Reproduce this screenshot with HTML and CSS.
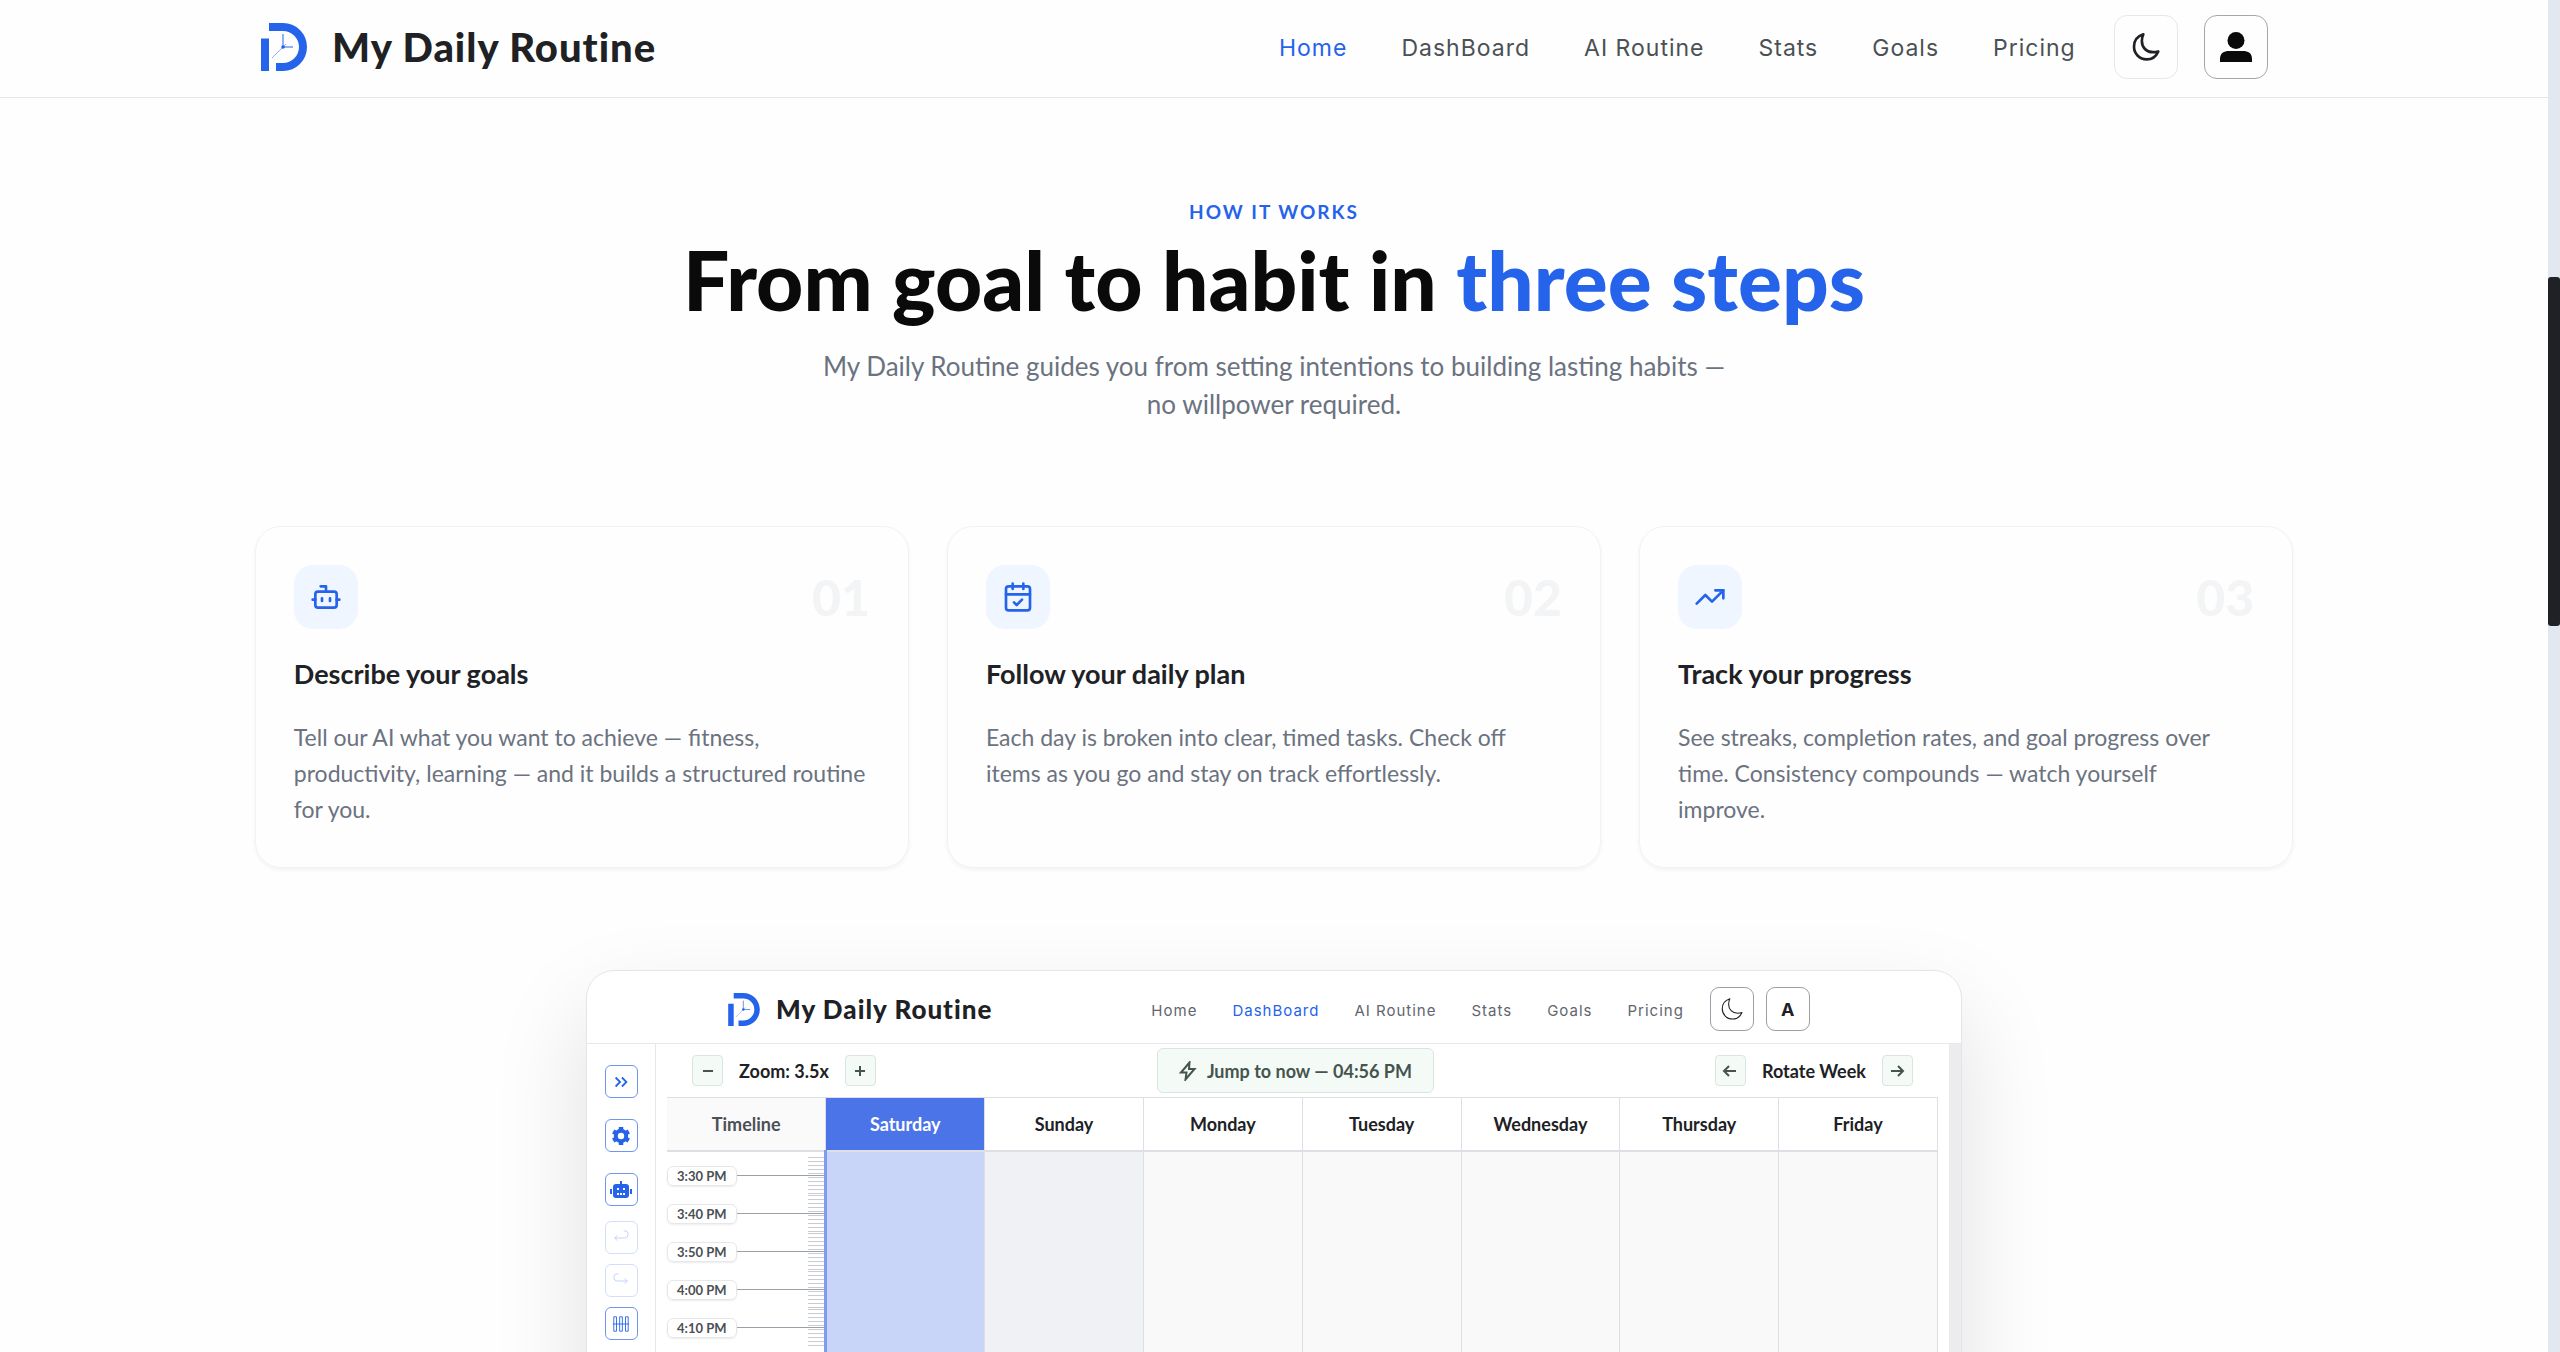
FILE: index.html
```html
<!DOCTYPE html>
<html lang="en">
<head>
  <meta charset="UTF-8" />
  <meta name="viewport" content="width=device-width, initial-scale=1.0"/>
  <title>My Daily Routine</title>
  <link rel="stylesheet" href="styles.css">
</head>
<body>

  <!-- Shared icons -->
  <svg class="sprite" aria-hidden="true">
    <symbol id="logo" viewBox="0 0 46 48">
      <path d="M0 15.500h8V48H0z M8 0h14a24 24 0 0 1 0 48h-7v-8h7a16 16 0 0 0 0-32H8z" fill="#2563eb"/>
      <path d="M22 11v13h10" fill="none" stroke="#2563eb" stroke-width="1"/>
      <path d="M25 21L11 35" fill="none" stroke="#2563eb" stroke-width="0.500"/>
      <circle cx="22" cy="24" r="1.800" fill="#2563eb"/>
    </symbol>
    <symbol id="moon" viewBox="0 0 24 24">
      <path d="M10 2.500C6 3.800 3 7 3 11.800a9.500 9.500 0 0 0 9.500 9.500c4 0 7-2 8.700-6-1.500.5-2.700.6-4 .6-5 0-8.300-3.600-8.300-8.400 0-1.800.3-3.200 1.100-5z" fill="none" stroke="currentColor" stroke-linejoin="round"/>
    </symbol>
  </svg>

  <div class="page">
    <header class="navbar">
      <a class="brand" href="#">
        <svg class="brand-logo"><use href="#logo"/></svg>
        <span>My Daily Routine</span>
      </a>
      <nav class="nav-links">
        <a class="active" href="#">Home</a>
        <a href="#">DashBoard</a>
        <a href="#">AI Routine</a>
        <a href="#">Stats</a>
        <a href="#">Goals</a>
        <a href="#">Pricing</a>
      </nav>
      <div class="nav-buttons">
        <button class="icon-button" aria-label="Toggle theme"><svg class="moon"><use href="#moon"/></svg></button>
        <button class="icon-button user" aria-label="Account">
          <svg viewBox="0 0 32 32" fill="#0a0a0a"><circle cx="16" cy="9.500" r="8.500"/><path d="M0 31v-3c0-6 4-8 9-8h14c5 0 9 2 9 8v3z"/></svg>
        </button>
      </div>
    </header>

    <main>
      <section class="intro">
        <p class="eyebrow">HOW IT WORKS</p>
        <h1>From goal to habit in <span>three steps</span></h1>
        <p class="lead">My Daily Routine guides you from setting intentions to building lasting habits — <br>no willpower required.</p>
      </section>

      <section class="steps">
        <article class="step">
          <div class="step-top">
            <div class="step-icon">
              <svg viewBox="0 0 24 24"><path d="M12 8V4H8M2 14h2M20 14h2M15 13v2M9 13v2"/><rect x="4" y="8" width="16" height="12" rx="2"/></svg>
            </div>
            <span class="step-number">01</span>
          </div>
          <h3>Describe your goals</h3>
          <p>Tell our AI what you want to achieve — fitness, productivity, learning — and it builds a structured routine for you.</p>
        </article>
        <article class="step">
          <div class="step-top">
            <div class="step-icon">
              <svg viewBox="0 0 24 24"><path d="M8 2v4M16 2v4M3 10h18M9 16l2 2 4-4"/><rect x="3" y="4" width="18" height="18" rx="2"/></svg>
            </div>
            <span class="step-number">02</span>
          </div>
          <h3>Follow your daily plan</h3>
          <p>Each day is broken into clear, timed tasks. Check off items as you go and stay on track effortlessly.</p>
        </article>
        <article class="step">
          <div class="step-top">
            <div class="step-icon">
              <svg viewBox="0 0 24 24"><path d="M16 7h6v6"/><path d="M22 7l-8.500 8.500-5-5L2 17"/></svg>
            </div>
            <span class="step-number">03</span>
          </div>
          <h3>Track your progress</h3>
          <p>See streaks, completion rates, and goal progress over time. Consistency compounds — watch yourself <br>improve.</p>
        </article>
      </section>

      <!-- Dashboard preview -->
      <section class="preview">
        <div class="preview-nav">
          <a class="brand" href="#">
            <svg class="brand-logo"><use href="#logo"/></svg>
            <span>My Daily Routine</span>
          </a>
          <nav class="nav-links">
            <a href="#">Home</a>
            <a class="active" href="#">DashBoard</a>
            <a href="#">AI Routine</a>
            <a href="#">Stats</a>
            <a href="#">Goals</a>
            <a href="#">Pricing</a>
          </nav>
          <div class="nav-buttons">
            <button class="icon-button" aria-label="Toggle theme"><svg class="moon"><use href="#moon"/></svg></button>
            <button class="icon-button">A</button>
          </div>
        </div>

        <div class="preview-body">
          <div class="sidebar">
            <div class="tools">
              <button aria-label="Expand"><svg viewBox="0 0 20 20"><path d="M4 5l5 5-5 5M11 5l5 5-5 5"/></svg></button>
              <button aria-label="Settings"><svg class="wide" viewBox="0 0 20 20"><circle cx="10" cy="10" r="5.200" stroke-width="4"/><path d="M10 1v3M10 16v3M2.200 5.500l2.600 1.500M15.200 13l2.600 1.500M2.200 14.500l2.600-1.500M15.200 7l2.600-1.500" stroke-width="4.500"/></svg></button>
              <button aria-label="AI"><svg class="wide" viewBox="0 0 22 20"><path d="M11 1v4M1 9v5M21 9v5" stroke-width="2"/><rect x="4" y="5" width="14" height="12" rx="2" fill="currentColor"/><path d="M7 9h2M13 9h2M7 14h2M10 14h2M13 14h2" stroke="#fff" stroke-width="2"/></svg></button>
            </div>
            <div class="history">
              <button disabled aria-label="Undo"><svg viewBox="0 0 20 20"><path d="M13 2h1a4 4 0 0 1 0 8H3M6 7l-3 3 3 3"/></svg></button>
              <button disabled aria-label="Redo"><svg viewBox="0 0 20 20"><path d="M7 2H6a4 4 0 0 0 0 8h11M14 7l3 3-3 3"/></svg></button>
              <button aria-label="Columns"><svg viewBox="0 0 20 20"><path d="M2 2h3v16H2zM8.500 2h3v16h-3zM15 2h3v16h-3zM1 10h18"/></svg></button>
            </div>
          </div>

          <div class="planner">
            <div class="toolbar">
              <div class="tool-group">
                <button aria-label="Zoom out"><svg viewBox="0 0 16 16"><path d="M3 8h10"/></svg></button>
                <span>Zoom: 3.5x</span>
                <button aria-label="Zoom in"><svg viewBox="0 0 16 16"><path d="M3 8h10M8 3v10"/></svg></button>
              </div>
              <button class="jump">
                <svg viewBox="0 0 18 20"><path d="M10.500 1.500L2 11.500h5.500l-1 7 9-10.500H10z"/></svg>
                Jump to now — 04:56 PM
              </button>
              <div class="tool-group">
                <button aria-label="Previous"><svg viewBox="0 0 16 16"><path d="M14 8H2M7 3L2 8l5 5"/></svg></button>
                <span>Rotate Week</span>
                <button aria-label="Next"><svg viewBox="0 0 16 16"><path d="M2 8h12M9 3l5 5-5 5"/></svg></button>
              </div>
            </div>
            <table class="week-table">
              <thead>
                <tr>
                  <th class="timeline">Timeline</th>
                  <th class="today">Saturday</th>
                  <th>Sunday</th>
                  <th>Monday</th>
                  <th>Tuesday</th>
                  <th>Wednesday</th>
                  <th>Thursday</th>
                  <th>Friday</th>
                </tr>
              </thead>
              <tbody>
                <tr>
                  <td class="times">
                    <div class="time"><span>3:30 PM</span></div>
                    <div class="time"><span>3:40 PM</span></div>
                    <div class="time"><span>3:50 PM</span></div>
                    <div class="time"><span>4:00 PM</span></div>
                    <div class="time"><span>4:10 PM</span></div>
                  </td>
                  <td class="today"></td>
                  <td class="next"></td>
                  <td></td>
                  <td></td>
                  <td></td>
                  <td></td>
                  <td></td>
                </tr>
              </tbody>
            </table>
          </div>
          <div class="gutter"></div>
        </div>
      </section>
    </main>
  </div>

  <div class="scrollbar"><div class="thumb"></div></div>

</body>
</html>
```
FILE: styles.css
```css
* {
  box-sizing: border-box;
}

body {
  font-family: Lato, sans-serif;
  margin: 0;
  background: #fefefe;
  color: #202124;
}

h1, h3, p {
  margin: 0;
}

a {
  color: inherit;
  text-decoration: none;
}

button {
  font-family: inherit;
  padding: 0;
  cursor: pointer;
}

.sprite {
  position: absolute;
  width: 0;
  height: 0;
}

.page {
  height: 100vh;
  overflow: hidden;
  padding-right: 12px;
}

/* Navbar */
.navbar {
  display: flex;
  align-items: center;
  height: 98px;
  padding: 0 11% 4px 261px;
  border-bottom: 1px solid #e5e7eb;
}

.brand {
  display: flex;
  align-items: center;
  gap: 25px;
  margin-right: auto;
  font-size: 40px;
  line-height: 44px;
  font-weight: 900;
  letter-spacing: 1px;
}

.brand-logo {
  width: 46px;
  height: 48px;
}

.nav-links {
  display: flex;
  gap: 54px;
  padding-top: 2px;
  font-family: Inter, sans-serif;
  font-size: 23px;
  letter-spacing: 1px;
  color: #4b5055;
}

.nav-links .active {
  color: #2563eb;
}

.nav-buttons {
  display: flex;
  gap: 26px;
  margin-left: 38px;
}

.icon-button {
  display: flex;
  align-items: center;
  justify-content: center;
  width: 64px;
  height: 64px;
  background: none;
  border: 1px solid #e5e7eb;
  border-radius: 13px;
  color: #202124;
}

.icon-button.user {
  border-color: #a3a6ad;
}

.icon-button svg {
  width: 32px;
  height: 32px;
}

.moon {
  stroke-width: 2;
}

/* Intro */
.intro {
  padding-top: 98px;
  text-align: center;
}

.eyebrow {
  font-size: 19px;
  line-height: 32px;
  font-weight: 700;
  letter-spacing: 2px;
  color: #2563eb;
}

h1 {
  margin-top: 3px;
  font-size: 82px;
  line-height: 96px;
  font-weight: 900;
  color: #0a0a0a;
}

h1 span {
  color: #2563eb;
}

.lead {
  margin-top: 20px;
  font-size: 26px;
  line-height: 38px;
  color: #6b7280;
}

/* Step cards */
.steps {
  display: grid;
  grid-template-columns: repeat(3, 1fr);
  gap: 38px;
  width: 80%;
  margin: 103px auto 0;
}

.step {
  padding: 38px 38px 40px;
  border: 1px solid #f1f2f4;
  border-radius: 26px;
  box-shadow: 0 2px 4px rgba(0, 0, 0, 0.05);
}

.step-top {
  display: flex;
  align-items: center;
  justify-content: space-between;
}

.step-icon {
  display: flex;
  align-items: center;
  justify-content: center;
  width: 64px;
  height: 64px;
  border-radius: 19px;
  background: #eff6ff;
}

.step-icon svg {
  width: 32px;
  height: 32px;
  fill: none;
  stroke: #2563eb;
  stroke-width: 2;
  stroke-linecap: round;
  stroke-linejoin: round;
}

.step-number {
  font-size: 50px;
  line-height: 50px;
  font-weight: 900;
  color: #f3f4f6;
}

.step h3 {
  margin-top: 26px;
  font-size: 27px;
  line-height: 38px;
}

.step p {
  margin-top: 26px;
  font-size: 23px;
  line-height: 36px;
  color: #6b7280;
}

/* Dashboard preview */
.preview {
  width: 54%;
  margin: 102px auto 0;
  border: 1px solid #e2e6ec;
  border-radius: 28px;
  overflow: hidden;
  background: #fff;
  box-shadow: 0 40px 96px rgba(0, 0, 0, 0.12);
}

.preview-nav {
  display: flex;
  align-items: center;
  height: 73px;
  padding: 4px 11% 0 141px;
  border-bottom: 1px solid #e5e7eb;
}

.preview-nav .brand {
  gap: 16px;
  font-size: 26px;
}

.preview-nav .brand-logo {
  width: 32px;
  height: 33px;
}

.preview-nav .nav-links {
  gap: 35px;
  font-size: 15px;
  color: #5f666e;
}

.preview-nav .nav-links .active {
  color: #2563eb;
}

.preview-nav .nav-buttons {
  gap: 12px;
  margin-left: 26px;
}

.preview-nav .icon-button {
  width: 44px;
  height: 44px;
  border-color: #9aa0a8;
  border-radius: 9px;
  font-family: Inter, sans-serif;
  font-size: 18px;
  font-weight: 700;
}

.preview-nav .icon-button svg {
  width: 26px;
  height: 26px;
}

.preview-nav .moon {
  stroke-width: 1;
}

.preview-body {
  display: flex;
}

.sidebar {
  width: 69px;
  padding-top: 21px;
  border-right: 1px solid #e5e7eb;
}

.tools, .history {
  display: flex;
  flex-direction: column;
  align-items: center;
  gap: 21px;
}

.history {
  gap: 10px;
  margin-top: 15px;
}

.sidebar button {
  display: flex;
  align-items: center;
  justify-content: center;
  width: 33px;
  height: 33px;
  border: 1px solid #6f95f0;
  border-radius: 6px;
  background: none;
  color: #2563eb;
}

.sidebar button:disabled {
  opacity: 0.3;
}

.sidebar svg {
  width: 18px;
  height: 18px;
  fill: none;
  stroke: currentColor;
  stroke-width: 2;
}

.sidebar .history svg {
  stroke-width: 1;
}

.sidebar .wide {
  width: 22px;
  height: 20px;
}

.planner {
  flex: 1;
  padding: 0 11px;
}

.toolbar {
  display: flex;
  align-items: center;
  justify-content: space-between;
  height: 53px;
  padding: 0 25px;
  font-size: 18px;
  font-weight: 700;
}

.tool-group {
  display: flex;
  align-items: center;
  gap: 16px;
}

.toolbar button {
  display: flex;
  align-items: center;
  justify-content: center;
  width: 31px;
  height: 31px;
  border: 1px solid #dbe5e0;
  border-radius: 4px;
  background: #f4fbf7;
  color: #46544e;
}

.toolbar svg {
  width: 16px;
  height: 16px;
  fill: none;
  stroke: currentColor;
  stroke-width: 2;
}

.toolbar .jump {
  gap: 10px;
  width: 277px;
  height: 45px;
  border-radius: 6px;
  font-size: 18px;
  font-weight: 700;
}

.toolbar .jump svg {
  width: 18px;
  height: 20px;
}

.week-table {
  width: 100%;
  table-layout: fixed;
  border-collapse: collapse;
}

.week-table th {
  height: 53px;
  padding: 0;
  border: 1px solid #dcdfe4;
  border-bottom-width: 2px;
  font-size: 18px;
}

.week-table .timeline {
  border-left: none;
  background: #fafafa;
  color: #4b5055;
}

.week-table th.today {
  background: #4a74e8;
  color: #fff;
}

.week-table td {
  height: 480px;
  padding: 0;
  border-right: 1px solid #dcdfe4;
  background: #f9f9f9;
  vertical-align: top;
}

.week-table td.today {
  border-left: 3px solid #7f9df0;
  background: #c8d4f8;
}

.week-table td.next {
  background: #f0f1f4;
}

.week-table td.times {
  padding-top: 5px;
  border-right: none;
  background: #fff;
}

.time {
  display: flex;
  align-items: center;
  height: 38px;
  background: repeating-linear-gradient(#c9ccd1 0 1px, transparent 1px 4px) right / 16px 100% no-repeat;
}

.time::after {
  content: "";
  flex: 1;
  height: 1px;
  background: #9ba1a8;
}

.time span {
  padding: 0 9px;
  border: 1px solid #e5e7eb;
  border-radius: 6px;
  box-shadow: 0 1px 2px rgba(0, 0, 0, 0.08);
  font-size: 13px;
  line-height: 18px;
  font-weight: 700;
  color: #4b5055;
}

.gutter {
  width: 12px;
  background: #ececee;
}

/* Page scrollbar */
.scrollbar {
  position: fixed;
  top: 0;
  right: 0;
  width: 12px;
  height: 100%;
  padding-top: 277px;
  background: #e2e8f0;
}

.thumb {
  height: 349px;
  border-radius: 3px;
  background: #202124;
}
```
